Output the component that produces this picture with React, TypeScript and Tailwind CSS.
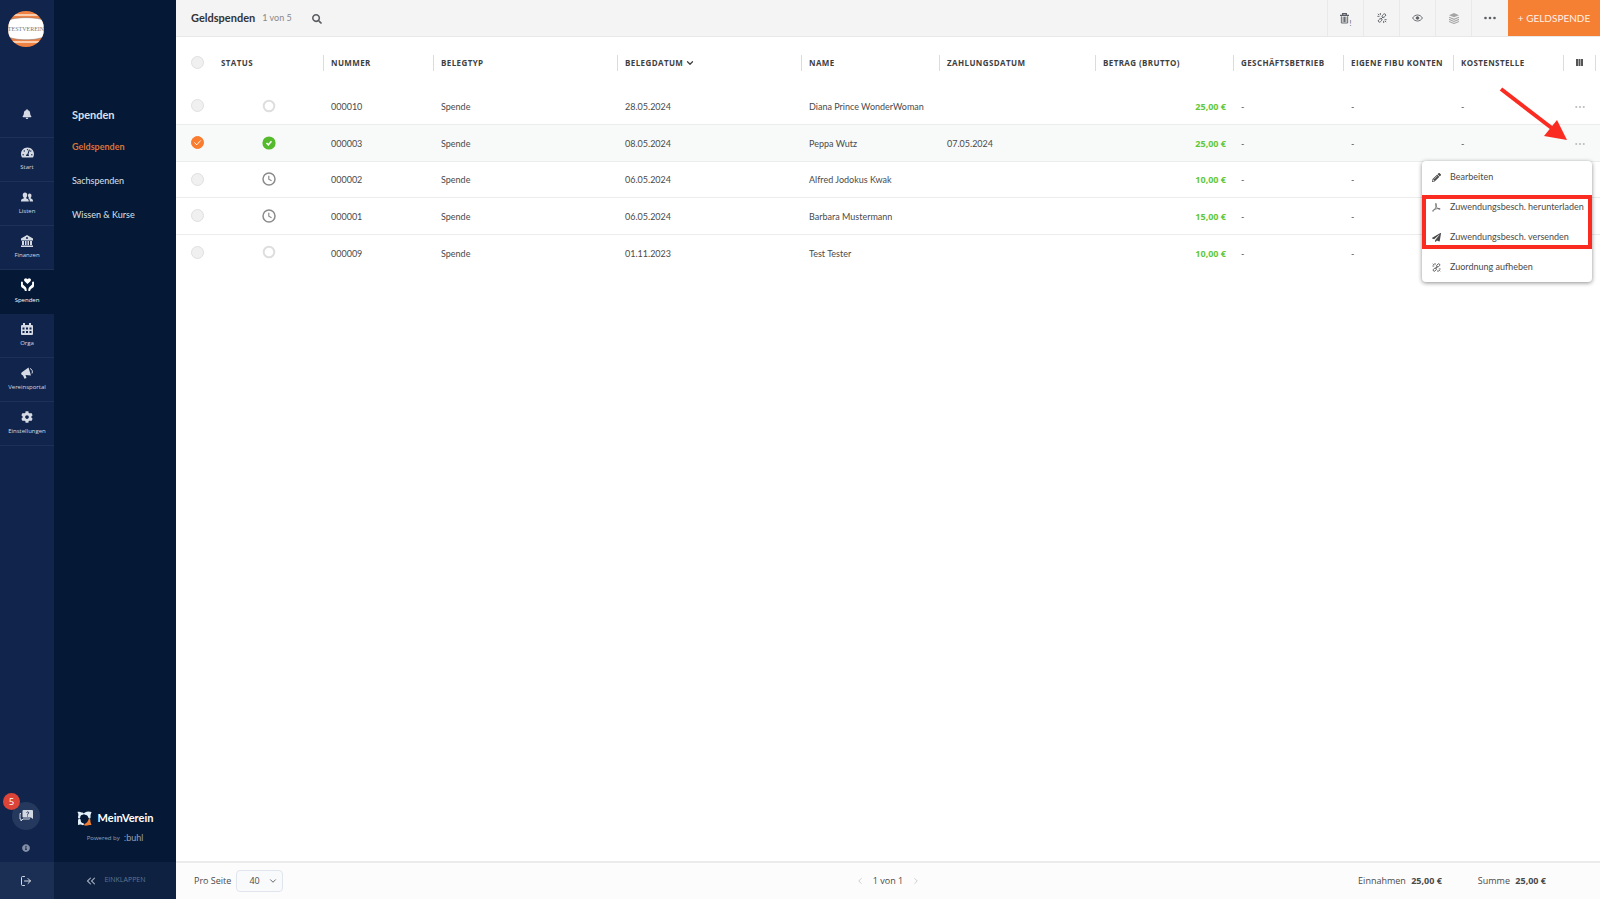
import { ChevronDown, ChevronLeft, ChevronRight, ChevronsLeft, LogOut } from "lucide-react"
import { FaBell, FaCog, FaInfoCircle, FaPaperPlane, FaPencilAlt, FaSearch, FaTachometerAlt } from "react-icons/fa"

const railItems = [
  { label: "Start", icon: <FaTachometerAlt className="size-[13px]" /> },
  { label: "Listen", icon: <PeopleIcon /> },
  { label: "Finanzen", icon: <BankIcon /> },
  { label: "Spenden", icon: <HandsHeartIcon />, active: true },
  { label: "Orga", icon: <CalendarGridIcon /> },
  { label: "Vereinsportal", icon: <MegaphoneIcon /> },
  { label: "Einstellungen", icon: <FaCog className="size-3" /> },
]

const subItems = ["Geldspenden", "Sachspenden", "Wissen & Kurse"]

const rows = [
  { nummer: "000010", status: "open", datum: "28.05.2024", name: "Diana Prince WonderWoman", zahlung: "", betrag: "25,00 €", kosten: "-" },
  { nummer: "000003", status: "done", datum: "08.05.2024", name: "Peppa Wutz", zahlung: "07.05.2024", betrag: "25,00 €", kosten: "-", selected: true },
  { nummer: "000002", status: "pending", datum: "06.05.2024", name: "Alfred Jodokus Kwak", zahlung: "", betrag: "10,00 €", kosten: "" },
  { nummer: "000001", status: "pending", datum: "06.05.2024", name: "Barbara Mustermann", zahlung: "", betrag: "15,00 €", kosten: "" },
  { nummer: "000009", status: "open", datum: "01.11.2023", name: "Test Tester", zahlung: "", betrag: "10,00 €", kosten: "" },
]

const headers = [
  "Nummer",
  "Belegtyp",
  "Belegdatum",
  "Name",
  "Zahlungsdatum",
  "Betrag (Brutto)",
  "Geschäftsbetrieb",
  "Eigene Fibu Konten",
  "Kostenstelle",
]

function PeopleIcon() {
  return (
    <svg viewBox="0 0 24 20" className="h-[10px] w-3" fill="currentColor">
      <path d="M8 1c3 0 4.500 2 4.500 5 0 2-.8 4-2 5v2c3 .8 5 1.500 5 5v1H0v-1c0-3.500 2-4.200 5.500-5v-2c-1.200-1-2-3-2-5 0-3 1.500-5 4.500-5Z" />
      <path d="M17 3c2.500 0 4 1.800 4 4.500 0 1.500-.7 3-1.500 4v1.500c2.500.7 4.500 1.500 4.500 5v1h-6.500c0-3-.5-5-3-6.500.5-.5 1-1 1-1.500-1-1-1.500-2-1.500-3.500C14 4.500 15 3 17 3Z" />
    </svg>
  )
}

function BankIcon() {
  return (
    <svg viewBox="0 0 24 24" className="size-3" fill="currentColor" fillRule="evenodd">
      <path d="M12 0 24 7v4H0V7Zm0 4a2 2 0 1 0 0 4 2 2 0 0 0 0-4Z" />
      <path d="M2 12h4v8H2Zm6 0h3v8H8Zm5 0h3v8h-3Zm5 0h4v8h-4ZM0 21h24v3H0Z" />
    </svg>
  )
}

function HandsHeartIcon() {
  return (
    <svg viewBox="0 0 24 24" className="size-[13px]" fill="currentColor">
      <path d="M12 11 6.600 5.800a3.100 3.100 0 0 1 4.500-4.300l.9.900.9-.9a3.100 3.100 0 0 1 4.500 4.300Z" />
      <path d="M0 8c0-2 3-2 3.500 0v4l5 4.500c1.500 1.500 2 3 2 7.500H7c0-2-.5-3-2-4l-4-3c-.7-.7-1-1.500-1-3Z" />
      <path d="M24 8c0-2-3-2-3.500 0v4l-5 4.500c-1.500 1.500-2 3-2 7.500H17c0-2 .5-3 2-4l4-3c.7-.7 1-1.500 1-3Z" />
    </svg>
  )
}

function CalendarGridIcon() {
  return (
    <svg viewBox="0 0 24 24" className="size-3" fill="currentColor" fillRule="evenodd">
      <path d="M4 0h4v4h8V0h4v4h2a2 2 0 0 1 2 2v16a2 2 0 0 1-2 2H2a2 2 0 0 1-2-2V6a2 2 0 0 1 2-2h2ZM3 9v4h4V9Zm7 0v4h4V9Zm7 0v4h4V9ZM3 16v4h4v-4Zm7 0v4h4v-4Zm7 0v4h4v-4Z" />
    </svg>
  )
}

function MegaphoneIcon() {
  return (
    <svg viewBox="0 0 24 24" className="size-3" fill="currentColor">
      <path d="M15 1 20 17 9 16l2 6-4 1.500L4 17c-4-1-5-5-1.500-7Z" />
      <path d="M18 3c4 1 6 6 4 10" fill="none" stroke="currentColor" strokeWidth="2" />
    </svg>
  )
}

function TrashIcon() {
  return (
    <svg viewBox="0 0 20 24" className="h-[11px] w-[9px]" fill="none" stroke="currentColor" strokeWidth="2">
      <path d="M0 5h20M6 4V1h8v3" strokeWidth="3" />
      <path d="M3 7v15h14V7M7 8v12M10 8v12M13 8v12" />
    </svg>
  )
}

function EyeIcon() {
  return (
    <svg viewBox="0 0 24 18" className="h-2 w-[11px]" fill="none" stroke="currentColor" strokeWidth="2">
      <path d="M1 9c5-9 17-9 22 0-5 9-17 9-22 0Z" />
      <circle cx="12" cy="9" r="3" fill="currentColor" />
    </svg>
  )
}

function LayersIcon() {
  return (
    <svg viewBox="0 0 24 26" className="h-[11px] w-[10px] text-[#a5a5a5]" fill="currentColor">
      <path d="m12 0 12 5-12 5L0 5Z" />
      <path d="m0 10 12 5 12-5M0 15l12 5 12-5M0 20l12 5 12-5" fill="none" stroke="currentColor" strokeWidth="2.500" />
    </svg>
  )
}

function UnlinkIcon({ className }: { className: string }) {
  return (
    <svg viewBox="0 0 24 24" className={className} fill="none" stroke="currentColor" strokeWidth="2.200">
      <rect x="13.500" y="1.500" width="6" height="10" rx="3" transform="rotate(45 16.500 6.500)" />
      <rect x="4.500" y="12.500" width="6" height="10" rx="3" transform="rotate(45 7.500 17.500)" />
      <path d="m9 15 6-6M8 0v5M1 8h5M2 2l3 3M16 24v-5M23 16h-5M22 22l-3-3" />
    </svg>
  )
}

function PdfIcon() {
  return (
    <svg viewBox="0 0 24 24" className="size-[9px] shrink-0" fill="none" stroke="currentColor" strokeWidth="1.800">
      <path d="M10 1c3 0 2 7-1 13-2 4-5 8-7 8-2-2 3-5 8-6 6-2 12-2 12 0s-5 1-8-3c-3-3-6-9-4-12Z" />
    </svg>
  )
}

function ChatHelpIcon() {
  return (
    <svg viewBox="0 0 28 24" className="h-3 w-[14px]">
      <path d="M9 0h17a2 2 0 0 1 2 2v16l-4-3H9a2 2 0 0 1-2-2V2a2 2 0 0 1 2-2Z" fill="#d3d9e2" />
      <path d="M4 7H2v11h2v4l4-4h13v-1" fill="none" stroke="#d3d9e2" strokeWidth="2" />
      <path d="M15 5c1-2 5-1.500 4.500 1C19 7.500 17 7.500 17 9.500m0 1.500v2" fill="none" stroke="#24395d" strokeWidth="2" />
    </svg>
  )
}

function ClubAvatar() {
  return (
    <svg viewBox="0 0 36 36" className="size-9" role="img" aria-label="Testverein">
      <clipPath id="avatar">
        <circle cx="18" cy="18" r="18" />
      </clipPath>
      <g clipPath="url(#avatar)">
        <path d="M0 0h36v36H0Z" fill="#ef8142" />
        <path d="M0 4h36M0 31h36" stroke="#ffe6d3" strokeWidth="1.600" />
        <path d="M0 10C3 5.500 33 5.500 36 10v15c-3 5-33 5-36 0Z" fill="#fff" stroke="#8d7469" strokeWidth=".6" />
      </g>
      <text x="18" y="20" textAnchor="middle" fontSize="6" fill="#777" fontFamily="Liberation Serif, serif">
        TESTVEREIN
      </text>
    </svg>
  )
}

function BrandMark() {
  return (
    <svg viewBox="0 0 32 32" className="size-[15px]">
      <path
        d="M1 2c4-1 7 2 11 1 4 2 4 4 0 5-4 0-5 3-5 6-2 3-5 2-5-1 1-3 2-6-1-11ZM17 3c5-3 9-2 14-1-1 4-3 6-2 11 0 4-3 4-5 1-1-4-3-6-7-6-3-1-3-4 0-5ZM3 17c3-1 5 0 5 3 0 4 3 5 6 6 2 3 0 5-3 4-4-2-6-1-9 0 1-4-1-8 1-13Z"
        fill="#e6f2fa"
      />
      <path d="M26 14c4 3 1 7 5 16-5-1-8 2-15 1-2-2 0-4 3-5 4-2 5-6 7-12Z" fill="#ef7d32" />
    </svg>
  )
}

function StatusIcon({ status }: { status: string }) {
  if (status === "done") {
    return (
      <svg viewBox="0 0 14 14" className="size-[14px]" role="img" aria-label="Zugeordnet">
        <circle cx="7" cy="7" r="6.600" fill="#56bb2c" />
        <path d="m4.500 7 1.800 1.800 3.200-3.500" fill="none" stroke="#fff" strokeWidth="1.500" />
      </svg>
    )
  }
  if (status === "pending") {
    return (
      <svg viewBox="0 0 14 14" className="size-[14px]" role="img" aria-label="Wartend" fill="none" stroke="#8b8b8b">
        <circle cx="7" cy="7" r="6" strokeWidth="1.500" />
        <path d="M6.800 3.800v3.400l2.800 1.500" strokeWidth="1.200" />
      </svg>
    )
  }
  return (
    <svg viewBox="0 0 14 14" className="size-[14px]" role="img" aria-label="Offen">
      <circle cx="7" cy="7" r="5.300" fill="none" stroke="#dedede" strokeWidth="2" />
    </svg>
  )
}

function Dots({ className }: { className: string }) {
  return (
    <svg viewBox="0 0 12 4" className={className} fill="currentColor">
      <circle cx="1.500" cy="2" r="1.300" />
      <circle cx="6" cy="2" r="1.300" />
      <circle cx="10.500" cy="2" r="1.300" />
    </svg>
  )
}

const checkbox =
  "block size-[13px] appearance-none rounded-full border border-[#e0e0e0] bg-[#f0f0f0] checked:border-[#f97c2f] checked:bg-[#f97c2f]"

function Rail() {
  return (
    <nav className="flex w-[54px] shrink-0 flex-col items-center bg-[#11254c] font-['Open_Sans'] text-[#d5dae4]">
      <div className="flex h-[92px] w-full justify-center pt-[11px] pr-[2px]">
        <ClubAvatar />
      </div>
      <button aria-label="Benachrichtigungen" className="flex h-[46px] w-full items-center justify-center border-b border-[#1d3157] pb-[2px]">
        <FaBell className="size-[10px]" />
      </button>
      {railItems.map((item) => (
        <a
          key={item.label}
          href="#"
          className={
            item.active
              ? "flex h-11 w-full flex-col items-center justify-between bg-[#051937] pt-2 pb-[10px] text-white"
              : "flex h-11 w-full flex-col items-center justify-between border-b border-[#1d3157] pt-2 pb-[10px]"
          }
        >
          <span className="flex h-[13px] items-center">{item.icon}</span>
          <span className="text-[6px] leading-[8px]">{item.label}</span>
        </a>
      ))}
      <div className="mt-auto flex flex-col items-center pr-[2px]">
        <div className="relative">
          <button aria-label="Hilfe" className="flex size-7 items-center justify-center rounded-full bg-[#24395d]">
            <ChatHelpIcon />
          </button>
          <span className="absolute -top-[9px] -left-[9px] flex size-[17px] items-center justify-center rounded-full bg-[#dc4437] text-[9px] text-white">
            5
          </span>
        </div>
        <button aria-label="Info" className="pt-[14px] pb-[10px] text-[#8390a8]">
          <FaInfoCircle className="size-2" />
        </button>
      </div>
      <button aria-label="Abmelden" className="flex h-[37px] w-full items-center justify-center bg-[#1b2f55] pr-[2px]">
        <LogOut className="size-3" />
      </button>
    </nav>
  )
}

function SubNav() {
  return (
    <aside className="flex w-[122px] shrink-0 flex-col bg-[#051937] text-[#dbe0e8]">
      <div className="px-[18px] pt-[106px]">
        <h2 className="text-[11px] leading-[18px] font-bold">Spenden</h2>
        <ul className="flex flex-col gap-4 pt-[14px] text-[9px] leading-[18px]">
          {subItems.map((item, i) => (
            <li key={item}>
              <a href="#" className={i === 0 ? "font-bold text-[#dc7236]" : ""}>
                {item}
              </a>
            </li>
          ))}
        </ul>
      </div>
      <div className="mt-auto flex flex-col items-center pb-4">
        <div className="flex items-center gap-[6px]">
          <BrandMark />
          <span className="text-[11px] leading-4 font-bold text-white">MeinVerein</span>
        </div>
        <div className="flex items-center gap-1 pt-1 text-[#97a2b5]">
          <span className="font-['Open_Sans'] text-[6px]">Powered by</span>
          <span className="font-['Liberation_Sans'] text-[9px] leading-4">:buhl</span>
        </div>
      </div>
      <button className="flex h-[37px] items-center justify-center gap-[6px] bg-[#0e2140] font-['Open_Sans'] text-[7px] text-[#65738b]">
        <ChevronsLeft className="size-[14px] text-[#9aa5b7]" />
        EINKLAPPEN
      </button>
    </aside>
  )
}

function Toolbar() {
  const tool = "flex w-9 items-center justify-center border-l border-[#e9e9e9]"
  return (
    <header className="flex h-[37px] shrink-0 items-stretch border-b border-[#e8e8e8] bg-[#f4f4f4] text-[#5a5d62]">
      <div className="flex items-center pl-[15px]">
        <h1 className="text-[11px] font-bold text-[#333]">Geldspenden</h1>
        <span className="pl-[7px] text-[9px] text-[#888]">1 von 5</span>
        <button aria-label="Suchen" className="pt-[2px] pl-5">
          <FaSearch className="size-[10px]" />
        </button>
      </div>
      <div className="ml-auto flex items-stretch">
        <button aria-label="Löschen" className={tool}>
          <TrashIcon />
          <span className="pt-[10px] pl-px text-[7px]">!</span>
        </button>
        <button aria-label="Zuordnung aufheben" className={tool}>
          <UnlinkIcon className="size-[10px]" />
        </button>
        <button aria-label="Anzeigen" className={tool}>
          <EyeIcon />
        </button>
        <button aria-label="Ebenen" className={tool}>
          <LayersIcon />
        </button>
        <button aria-label="Mehr" className={tool}>
          <Dots className="h-1 w-3" />
        </button>
        <button className="ml-px w-[92px] bg-[#f58033] text-[10px] text-[#fff0e6]">+ GELDSPENDE</button>
      </div>
    </header>
  )
}

function RowMenu() {
  const item = "flex h-[30px] w-full items-center gap-[9px] pl-[10px] text-left whitespace-nowrap"
  return (
    <div className="absolute top-[161px] right-2 z-10 w-[170px] rounded-sm bg-white pt-px text-[9px] text-[#4a4a4a] shadow-[0_1px_4px_rgba(0,0,0,0.45)]">
      <button className={item}>
        <FaPencilAlt className="size-[9px] shrink-0" />
        Bearbeiten
      </button>
      <button className={item}>
        <PdfIcon />
        Zuwendungsbesch. herunterladen
      </button>
      <button className={item}>
        <FaPaperPlane className="size-[9px] shrink-0" />
        Zuwendungsbesch. versenden
      </button>
      <button className={item}>
        <UnlinkIcon className="size-[9px] shrink-0" />
        Zuordnung aufheben
      </button>
      <div className="pointer-events-none absolute inset-x-0 top-[34px] h-[54px] border-4 border-[#fa2b20]" />
    </div>
  )
}

function DonationTable() {
  return (
    <table className="w-full table-fixed text-left text-[9px] text-[#4a4a4a]">
      <colgroup>
        <col className="w-[37px]" />
        <col className="w-[110px]" />
        <col className="w-[110px]" />
        <col className="w-[184px]" />
        <col className="w-[184px]" />
        <col className="w-[138px]" />
        <col className="w-[156px]" />
        <col className="w-[138px]" />
        <col className="w-[110px]" />
        <col className="w-[110px]" />
        <col className="w-[110px]" />
        <col className="w-[37px]" />
      </colgroup>
      <thead className="font-['Open_Sans']">
        <tr className="h-[51px] text-[8px] font-bold tracking-wider whitespace-nowrap text-[#3f3f3f] uppercase">
          <th className="pl-[15px]">
            <input type="checkbox" aria-label="Alle auswählen" className={checkbox} />
          </th>
          <th className="pl-2">Status</th>
          {headers.map((header) => (
            <th key={header}>
              <div className="flex h-4 items-center gap-[2px] border-l border-[#dcdcdc] pl-[7px]">
                {header}
                {header === "Belegdatum" && <ChevronDown className="size-[10px]" strokeWidth={3} />}
              </div>
            </th>
          ))}
          <th className="pr-1">
            <div className="flex h-4 items-center justify-center border-x border-[#dcdcdc]">
              <button aria-label="Spalten" className="flex">
                <svg viewBox="0 0 7 7" className="size-[7px]" fill="#555">
                  <path d="M0 0h2v7H0Zm2.500 0h2v7h-2ZM5 0h2v7H5Z" />
                </svg>
              </button>
            </div>
          </th>
        </tr>
      </thead>
      <tbody>
        {rows.map((row) => (
          <tr
            key={row.nummer}
            className={
              row.selected
                ? "h-[37px] border-b border-[#ececec] bg-[#f8faf9]"
                : "h-9 border-b border-[#ececec] last:border-0 even:h-[37px]"
            }
          >
            <td className="pl-[15px]">
              <span className="relative block size-[13px]">
                <input type="checkbox" aria-label={row.nummer} defaultChecked={row.selected} className={checkbox} />
                {row.selected && (
                  <svg viewBox="0 0 13 13" className="pointer-events-none absolute inset-0" fill="none" stroke="#fff">
                    <path d="m3.500 6.500 2.200 2.300 4-4.300" />
                  </svg>
                )}
              </span>
            </td>
            <td className="pl-[49px]">
              <StatusIcon status={row.status} />
            </td>
            <td className="pt-[2px] pl-2">{row.nummer}</td>
            <td className="pt-[2px] pl-2">Spende</td>
            <td className="pt-[2px] pl-2">{row.datum}</td>
            <td className="pt-[2px] pl-2 whitespace-nowrap">{row.name}</td>
            <td className="pt-[2px] pl-2">{row.zahlung}</td>
            <td className="pt-[2px] pr-[7px] text-right font-['Open_Sans'] font-bold text-[#62c83a]">{row.betrag}</td>
            <td className="pt-[2px] pl-2">-</td>
            <td className="pt-[2px] pl-2">-</td>
            <td className="pt-[2px] pl-2">{row.kosten}</td>
            <td className="pt-[2px] pr-1">
              <button aria-label="Aktionen" className="mx-auto block text-[#bdbdbd]">
                <Dots className="h-1 w-[10px]" />
              </button>
            </td>
          </tr>
        ))}
      </tbody>
    </table>
  )
}

function Footer() {
  return (
    <footer className="grid h-[38px] shrink-0 grid-cols-3 items-center border-t-2 border-[#ebebeb] bg-[#fcfcfc] font-['Open_Sans'] text-[9px] text-[#4a4a4a]">
      <div className="flex items-center gap-[5px] pl-[18px]">
        <label htmlFor="page-size">Pro Seite</label>
        <div className="relative">
          <select
            id="page-size"
            className="h-[22px] w-[47px] appearance-none rounded-sm border border-[#e1e5ee] bg-[#f9fafc] pl-3"
          >
            <option>40</option>
          </select>
          <ChevronDown className="pointer-events-none absolute top-[6px] right-[5px] size-[10px]" />
        </div>
      </div>
      <div className="flex items-center justify-center gap-2">
        <button aria-label="Zurück">
          <ChevronLeft className="size-[10px] text-[#c4c4c4]" />
        </button>
        1 von 1
        <button aria-label="Weiter">
          <ChevronRight className="size-[10px] text-[#c4c4c4]" />
        </button>
      </div>
      <div className="flex justify-end gap-9 pr-[54px]">
        <span>
          Einnahmen <b className="pl-[3px]">25,00 €</b>
        </span>
        <span>
          Summe <b className="pl-[3px]">25,00 €</b>
        </span>
      </div>
    </footer>
  )
}

export default function App() {
  return (
    <div className="flex min-h-screen bg-white font-['Lato','Open_Sans',sans-serif]">
      <Rail />
      <SubNav />
      <main className="relative flex min-w-0 flex-1 flex-col">
        <Toolbar />
        <div className="flex-1">
          <DonationTable />
        </div>
        <RowMenu />
        <svg viewBox="0 0 70 54" className="pointer-events-none absolute top-[87px] right-[31px] h-[54px] w-[70px]">
          <path d="m2 2 52 40" stroke="#fa2b20" strokeWidth="4" />
          <path d="M68 53 45 49l13-16Z" fill="#fa2b20" />
        </svg>
        <Footer />
      </main>
    </div>
  )
}
